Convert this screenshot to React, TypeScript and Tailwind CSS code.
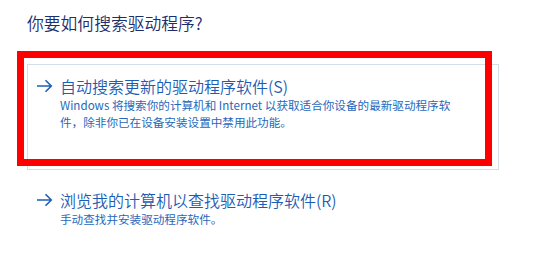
const font = { fontFamily: '"Noto Sans CJK SC", "Noto Sans", sans-serif' };

function Arrow() {
  return (
    <svg width="17" height="14" viewBox="0 0 17 14" className="shrink-0">
      <path d="M1 7h14.5M9.5 1.2 15.3 7l-5.8 5.8" fill="none" stroke="#1f5fb6" strokeWidth="1.6" />
    </svg>
  );
}

function CommandLink({
  title,
  lines,
  boxed,
}: {
  title: string;
  lines: string[];
  boxed?: boolean;
}) {
  return (
    <div
      className={
        boxed
          ? "box-border h-[106px] w-[472px] border border-[#d3dee9] pl-[8px] pt-[11px]"
          : "box-border w-[472px] pl-[9px] pt-0"
      }
    >
      <div className="flex h-[20px] items-center">
        <Arrow />
        <span className="ml-[7px] text-[16px] leading-[20px] font-[350] text-[#1c5db3]">{title}</span>
      </div>
      <div className="ml-[24px] mt-[1px] text-[11.6px] leading-[17px] font-normal text-[#2767ba]">
        {lines.map((l) => (
          <div key={l} className="whitespace-nowrap">
            {l}
          </div>
        ))}
      </div>
    </div>
  );
}

export default function App() {
  return (
    <main className="relative h-[263px] w-[535px] overflow-hidden bg-white" style={font}>
      <div className="pl-[27px] pt-[13px]">
        <h1 className="text-[16.8px] leading-[21px] font-[350] text-[#1d2e6c]">你要如何搜索驱动程序?</h1>

        <div className="mt-[30px]">
          <CommandLink
            boxed
            title="自动搜索更新的驱动程序软件(S)"
            lines={[
              "Windows 将搜索你的计算机和 Internet 以获取适合你设备的最新驱动程序软",
              "件，除非你已在设备安装设置中禁用此功能。",
            ]}
          />
        </div>

        <div className="mt-[20px]">
          <CommandLink title="浏览我的计算机以查找驱动程序软件(R)" lines={["手动查找并安装驱动程序软件。"]} />
        </div>
      </div>

      {/* red annotation frame */}
      <div className="pointer-events-none absolute left-[17px] top-[51px] box-border h-[115px] w-[475px] border-[7px] border-[#ff0000]" />
    </main>
  );
}
